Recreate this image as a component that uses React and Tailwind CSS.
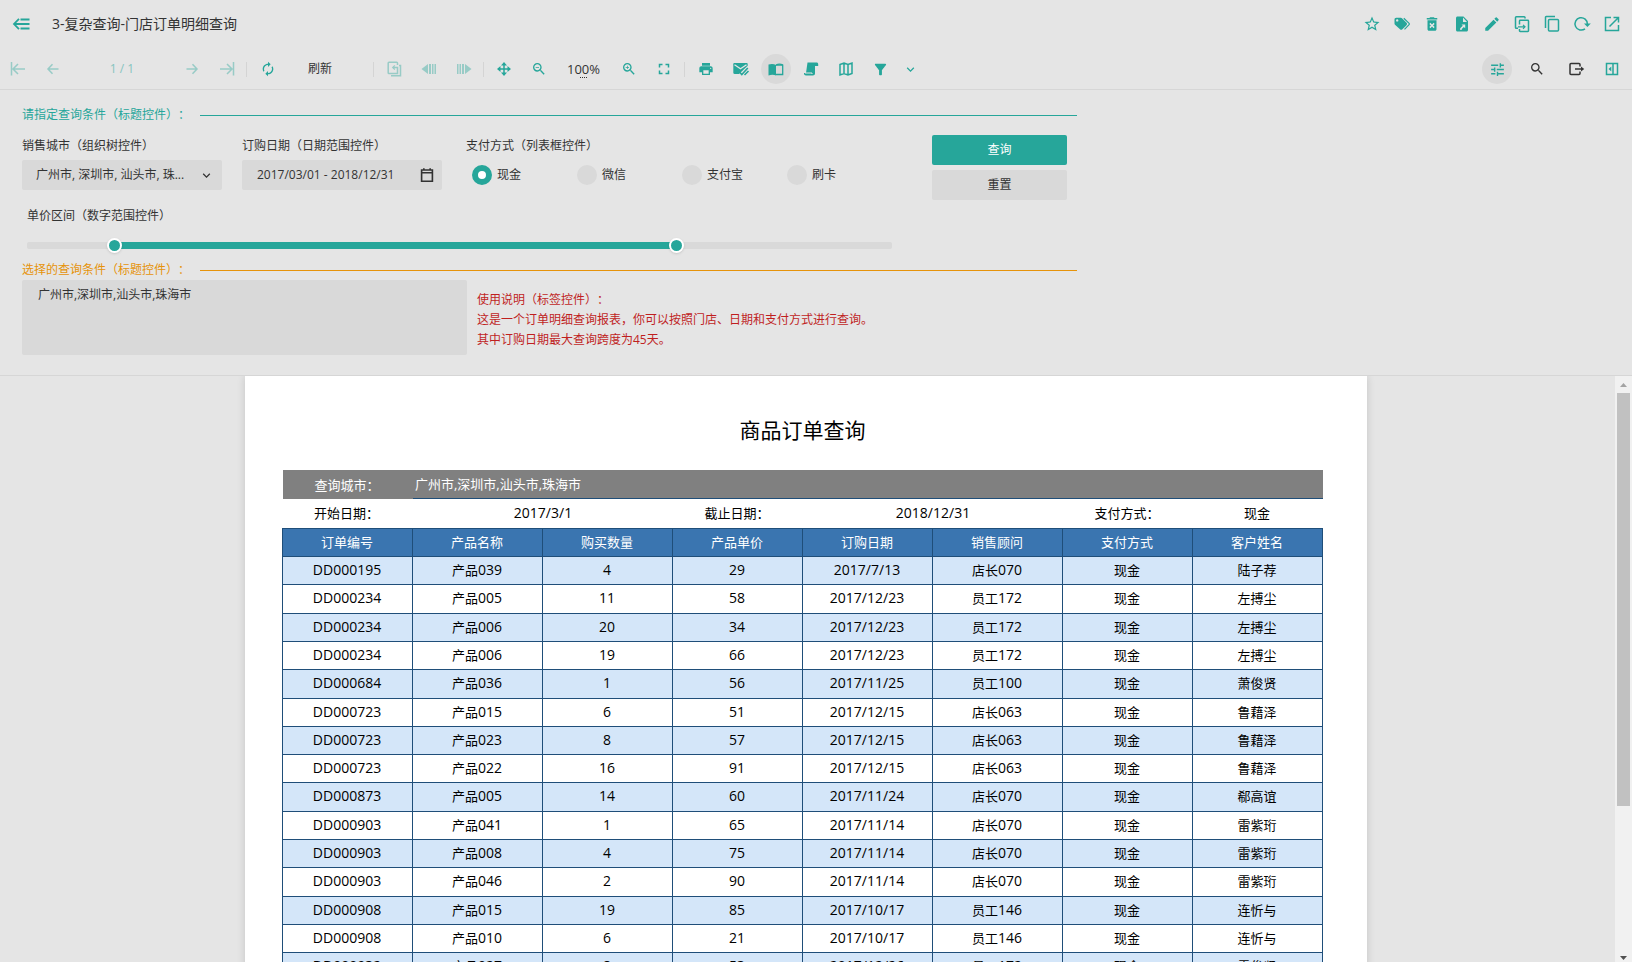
import { useState } from 'react';
import {
  MdAutorenew,
  MdDeleteForever,
  MdEdit,
  MdExpandMore,
  MdFilterAlt,
  MdFullscreen,
  MdPrint,
  MdSearch,
  MdStarBorder,
  MdTune,
  MdZoomIn,
  MdZoomOut,
} from 'react-icons/md';

const Svg = ({ children, className = '' }) => (
  <svg
    viewBox="0 0 20 20"
    className={`h-5 w-5 ${className}`}
    fill="none"
    stroke="currentColor"
    strokeWidth="1.5"
    aria-hidden="true"
  >
    {children}
  </svg>
);

const BackIcon = () => (
  <Svg>
    <path strokeWidth="1.8" d="M8 4.8 3 10l5 5.2M3 10h15.5M9.5 5.5h9M9.5 14.5h9" />
  </Svg>
);
const FirstIcon = () => (
  <Svg>
    <path d="M3.5 3v13.5M10 5l-5 5 5 5M5 10h12" />
  </Svg>
);
const PrevIcon = () => (
  <Svg>
    <path d="M9.5 5.2 5 10l4.5 4.8M5 10h10.5" />
  </Svg>
);
const NextIcon = () => (
  <Svg>
    <path d="M10.5 5.2 15 10l-4.5 4.8M15 10H4.5" />
  </Svg>
);
const LastIcon = () => (
  <Svg>
    <path d="M16.5 3v13.5M10 5l5 5-5 5M15 10H3" />
  </Svg>
);
const TagsIcon = () => (
  <Svg>
    <path
      fill="currentColor"
      stroke="none"
      fillRule="evenodd"
      d="M2.500 5.500c0-1 .7-1.700 1.700-1.700h4.600c.5 0 .9.2 1.200.500l4.500 4.500c.7.700.7 1.700 0 2.400l-4.100 4.100c-.7.700-1.700.7-2.400 0L3 10.800c-.3-.3-.5-.7-.5-1.200zM5.200 5.200a1.200 1.200 0 1 0 0 2.400 1.200 1.200 0 0 0 0-2.400z"
    />
    <path strokeWidth="1.2" d="m11.800 4.200 5.300 5.200c.4.400.4.900 0 1.300l-4.600 4.600" />
  </Svg>
);
const FileShareIcon = () => (
  <Svg>
    <path
      fill="currentColor"
      stroke="none"
      fillRule="evenodd"
      d="M5.500 2.500h6l4.500 4.500v9c0 .8-.7 1.500-1.500 1.500h-9C4.700 17.500 4 16.800 4 16V4c0-.8.7-1.500 1.500-1.500zM11 3.500V8h4zM9.500 10.500l1.300 1.300-2.600 2.500v1.700h1.500v-1l2.200-2.100 1.300 1.300v-3.700z"
    />
  </Svg>
);
const CopyArrowIcon = () => (
  <Svg>
    <path d="M13 4.500V3.500c0-.5-.3-.8-.8-.8H4.300c-.5 0-.8.3-.8.8v10c0 .5.3.8.8.8H6" />
    <path d="M7.500 10.500V7c0-.4.300-.7.700-.7h7.600c.4 0 .7.300.7.700v9.800c0 .4-.3.700-.7.700H8.200c-.4 0-.7-.3-.7-.7V15" />
    <path strokeWidth="1.2" d="M6 12.800h6.800M11 10.800l2 2-2 2" />
  </Svg>
);
const CopyIcon = () => (
  <Svg>
    <path d="M3.500 14V3.200c0-.4.3-.7.700-.7H13" />
    <rect x="6.5" y="5.5" width="10" height="11.5" rx="1" />
  </Svg>
);
const RedoIcon = () => (
  <Svg>
    <path d="M13 14.800a6.200 6.200 0 1 1 2.400-4.800" />
    <path fill="currentColor" stroke="none" d="M12 9.500h6.800L15.400 13z" />
  </Svg>
);
const OpenIcon = () => (
  <Svg>
    <path d="M9 3.500H3.500v13h13V11M11.500 3.500h5v5M16.500 3.500l-9 9" />
  </Svg>
);
const ExportCopyIcon = () => (
  <Svg>
    <path d="M13.500 6V4c0-.5-.3-.8-.8-.8H5c-.5 0-.8.3-.8.8v9.800c0 .5.300.8.8.8h8.500V8.500H9" />
    <path strokeWidth="1.2" d="M10.800 6.500 8.700 8.500l2.100 2" />
    <path d="M15 6.500h1.500v10.300H7" />
  </Svg>
);
const StepBackIcon = () => (
  <Svg>
    <path fill="currentColor" stroke="none" d="M2.500 10 9 5v10zM10 5h2v10h-2zM13 5h1.500v10H13zM15.500 5H17v10h-1.500z" />
  </Svg>
);
const StepForwardIcon = () => (
  <Svg>
    <path fill="currentColor" stroke="none" d="M17.500 10 11 5v10zM8 5h2v10H8zM5.500 5H7v10H5.500zM3 5h1.500v10H3z" />
  </Svg>
);
const MoveIcon = () => (
  <Svg>
    <path d="M10 4v12M4 10h12" />
    <path
      fill="currentColor"
      stroke="none"
      d="m10 3 3 3.500H7zM10 17l3-3.500H7zM3 10l3.500-3v6zM17 10l-3.500-3v6z"
    />
  </Svg>
);
const MailIcon = () => (
  <Svg>
    <path
      fill="currentColor"
      stroke="none"
      d="M3.500 4h12c.8 0 1.200.5 1.200 1.200v1.600L8 15H3.500c-.8 0-1.200-.5-1.200-1.200V5.200C2.300 4.500 2.700 4 3.500 4z"
    />
    <path stroke="#e5e5e5" strokeWidth="1.3" d="m3.500 5.800 6 4 6-4" />
    <path strokeWidth="1.6" d="m8.500 13 2.300 2.500 6-6.500M13.500 16l4-4" />
  </Svg>
);
const BookIcon = () => (
  <Svg>
    <path d="M10 6.200h6.700v9.300H10" strokeWidth="1.3" />
    <path
      fill="currentColor"
      stroke="none"
      d="M2.500 5.500C5 4.700 8 4.700 10 6v10.500c-2-1-5-1-7.500 0z"
    />
    <path d="M10 6c2-1 4.500-1 6.800-.2" strokeWidth="1.3" />
  </Svg>
);
const ScrollIcon = () => (
  <Svg>
    <path
      fill="currentColor"
      stroke="none"
      d="M6.500 3.500h9c1 0 1.700.7 1.700 1.700V7H14v7.500c0 1.300-.9 2-2 2H5c-1.200 0-2-.8-2-2V14h2z"
    />
    <path stroke="#e5e5e5" strokeWidth="1" d="M4 14h7v1" />
  </Svg>
);
const MapIcon = () => (
  <Svg>
    <path d="M4 5.500 8 4l4 1.500L16 4v10.500L12 16l-4-1.500L4 16zM8 4v10.500M12 5.500V16" />
  </Svg>
);
const ExitIcon = () => (
  <Svg>
    <path d="M13 7.500V5.500c0-.6-.4-1-1-1H4c-.6 0-1 .4-1 1v9c0 .6.4 1 1 1h8c.6 0 1-.4 1-1v-2" />
    <path d="M8 10h8" />
    <path fill="currentColor" stroke="none" d="M14 7.500 17.200 10 14 12.500z" />
  </Svg>
);
const PanelIcon = () => (
  <Svg>
    <path d="M4.500 4.500h11v11h-11zM11 4.500v11" />
    <path fill="currentColor" stroke="none" d="M9.300 7.500v5L6.500 10z" />
  </Svg>
);
const CalendarIcon = () => (
  <Svg className="h-[18px] w-[18px]">
    <path d="M4 4.500h12v12.500H4zM4 7.500h12M6.500 2.500v2M13.500 2.500v2" strokeWidth="1.8" />
  </Svg>
);

const IconButton = ({ label, children, size = 'w-[35px]', tone = 'text-[#26a69a]', active, disabled }) => (
  <button
    type="button"
    aria-label={label}
    disabled={disabled}
    className={`flex h-[30px] shrink-0 items-center justify-center ${size} ${tone} ${disabled ? 'opacity-40' : ''}`}
  >
    {active ? (
      <span className="flex h-[30px] w-[30px] shrink-0 items-center justify-center rounded-full bg-[#d9d9d9]">{children}</span>
    ) : (
      children
    )}
  </button>
);

const Divider = ({ className }) => <span className={`h-[15px] w-px shrink-0 bg-[#d4d4d4] ${className}`} />;

const SectionTitle = ({ children, tone, line }) => (
  <div className="flex h-5 max-w-[1055px] items-center">
    <h2 className={`w-[178px] shrink-0 whitespace-nowrap ${tone}`}>{children}</h2>
    <span className={`h-px flex-1 ${line}`} />
  </div>
);

const payments = ['现金', '微信', '支付宝', '刷卡'];

const columns = ['订单编号', '产品名称', '购买数量', '产品单价', '订购日期', '销售顾问', '支付方式', '客户姓名'];

const orders = [
  ['DD000195', '产品039', '4', '29', '2017/7/13', '店长070', '现金', '陆子荐'],
  ['DD000234', '产品005', '11', '58', '2017/12/23', '员工172', '现金', '左搏尘'],
  ['DD000234', '产品006', '20', '34', '2017/12/23', '员工172', '现金', '左搏尘'],
  ['DD000234', '产品006', '19', '66', '2017/12/23', '员工172', '现金', '左搏尘'],
  ['DD000684', '产品036', '1', '56', '2017/11/25', '员工100', '现金', '萧俊贤'],
  ['DD000723', '产品015', '6', '51', '2017/12/15', '店长063', '现金', '鲁藉泽'],
  ['DD000723', '产品023', '8', '57', '2017/12/15', '店长063', '现金', '鲁藉泽'],
  ['DD000723', '产品022', '16', '91', '2017/12/15', '店长063', '现金', '鲁藉泽'],
  ['DD000873', '产品005', '14', '60', '2017/11/24', '店长070', '现金', '郗高谊'],
  ['DD000903', '产品041', '1', '65', '2017/11/14', '店长070', '现金', '雷紫珩'],
  ['DD000903', '产品008', '4', '75', '2017/11/14', '店长070', '现金', '雷紫珩'],
  ['DD000903', '产品046', '2', '90', '2017/11/14', '店长070', '现金', '雷紫珩'],
  ['DD000908', '产品015', '19', '85', '2017/10/17', '员工146', '现金', '连忻与'],
  ['DD000908', '产品010', '6', '21', '2017/10/17', '员工146', '现金', '连忻与'],
  ['DD000932', '产品027', '8', '53', '2017/12/26', '员工172', '现金', '雷俊贤'],
];

const rangeClass =
  'pointer-events-none absolute inset-0 h-5 w-full appearance-none bg-transparent [&::-webkit-slider-thumb]:pointer-events-auto [&::-webkit-slider-thumb]:h-[15px] [&::-webkit-slider-thumb]:w-[15px] [&::-webkit-slider-thumb]:appearance-none [&::-webkit-slider-thumb]:rounded-full [&::-webkit-slider-thumb]:border-2 [&::-webkit-slider-thumb]:border-white [&::-webkit-slider-thumb]:bg-[#26a69a] [&::-webkit-slider-thumb]:shadow';

const PriceRange = () => {
  const [low, setLow] = useState(94);
  const [high, setHigh] = useState(755);

  return (
    <div className="ml-[5px] mt-[5px] max-w-[865px]">
      <div className="h-[21px] leading-[21px]">单价区间（数字范围控件）</div>
      <div className="relative mb-[5px] mt-[9px] flex h-5 items-center">
        <div className="h-[7px] w-full overflow-hidden rounded-xs bg-[#d9d9d9]">
          <div
            className="h-full bg-[#26a69a]"
            style={{ marginLeft: `${low / 10}%`, width: `${(high - low) / 10}%` }}
          />
        </div>
        <input type="range" aria-label="最低单价" min="0" max="1000" value={low} onChange={(e) => setLow(Number(e.target.value))} className={rangeClass} />
        <input type="range" aria-label="最高单价" min="0" max="1000" value={high} onChange={(e) => setHigh(Number(e.target.value))} className={rangeClass} />
      </div>
    </div>
  );
};

const Header = () => (
  <header className="shrink-0 border-b border-[#d6d6d6]">
    <div className="flex h-12 items-center justify-between pl-[11px] pr-[5px]">
      <div className="flex items-center">
        <button type="button" aria-label="返回" className="w-5 text-[#26a69a]">
          <BackIcon />
        </button>
        <h1 className="ml-[21px] text-sm">3-复杂查询-门店订单明细查询</h1>
      </div>
      <div className="flex">
        <IconButton label="收藏" size="w-[30px]"><MdStarBorder size={18} /></IconButton>
        <IconButton label="标签" size="w-[30px]"><TagsIcon /></IconButton>
        <IconButton label="删除" size="w-[30px]"><MdDeleteForever size={18} /></IconButton>
        <IconButton label="另存为" size="w-[30px]"><FileShareIcon /></IconButton>
        <IconButton label="编辑" size="w-[30px]"><MdEdit size={18} /></IconButton>
        <IconButton label="移动到" size="w-[30px]"><CopyArrowIcon /></IconButton>
        <IconButton label="复制" size="w-[30px]"><CopyIcon /></IconButton>
        <IconButton label="重新加载" size="w-[30px]"><RedoIcon /></IconButton>
        <IconButton label="新窗口打开" size="w-[30px]"><OpenIcon /></IconButton>
      </div>
    </div>

    <div className="flex h-[41px] items-center justify-between pt-px">
      <div className="flex items-center">
        <IconButton label="首页" disabled><FirstIcon /></IconButton>
        <IconButton label="上一页" disabled><PrevIcon /></IconButton>
        <span className="w-[104px] text-center text-xs text-[#26a69a] opacity-50">1 / 1</span>
        <IconButton label="下一页" disabled><NextIcon /></IconButton>
        <IconButton label="末页" disabled><LastIcon /></IconButton>
        <Divider className="ml-0.5 mr-[3px]" />
        <IconButton label="自动刷新"><MdAutorenew size={16} /></IconButton>
        <button type="button" className="h-[30px] w-[70px] text-xs">刷新</button>
        <Divider className="ml-[18px] mr-0.5" />
        <IconButton label="导出" disabled><ExportCopyIcon /></IconButton>
        <IconButton label="后退" disabled><StepBackIcon /></IconButton>
        <IconButton label="前进" disabled><StepForwardIcon /></IconButton>
        <Divider className="mx-0.5" />
        <IconButton label="拖动"><MoveIcon /></IconButton>
        <IconButton label="缩小"><MdZoomOut size={16} /></IconButton>
        <button type="button" className="flex h-[30px] w-[55px] flex-col items-center justify-center text-[13px] leading-4">
          100%
          <span className="w-[7px] border-b border-dotted border-[#333]" />
        </button>
        <IconButton label="放大"><MdZoomIn size={16} /></IconButton>
        <IconButton label="全屏"><MdFullscreen size={18} /></IconButton>
        <Divider className="mx-[3px]" />
        <IconButton label="打印"><MdPrint size={16} /></IconButton>
        <IconButton label="邮件"><MailIcon /></IconButton>
        <IconButton label="分页阅读" active><BookIcon /></IconButton>
        <IconButton label="连续阅读"><ScrollIcon /></IconButton>
        <IconButton label="导航图"><MapIcon /></IconButton>
        <IconButton label="筛选"><MdFilterAlt size={17} /></IconButton>
        <IconButton label="更多" size="w-[25px]"><MdExpandMore size={15} /></IconButton>
      </div>
      <div className="flex items-center pr-[5px]">
        <IconButton label="查询条件" size="w-10" active><MdTune size={17} /></IconButton>
        <IconButton label="搜索" size="w-10" tone="text-[#333]"><MdSearch size={16} /></IconButton>
        <IconButton label="导出报表" size="w-10" tone="text-[#333]"><ExitIcon /></IconButton>
        <IconButton label="侧栏" size="w-[30px]"><PanelIcon /></IconButton>
      </div>
    </div>
  </header>
);

const QueryPanel = () => {
  const [payment, setPayment] = useState('现金');

  return (
    <section className="shrink-0 border-b border-[#d6d6d6] px-[22px] pb-5 pt-[15px]">
      <SectionTitle tone="text-[#26a69a]" line="bg-[#26a69a]">请指定查询条件（标题控件）：</SectionTitle>

      <div className="mt-2.5 flex max-w-[1045px] justify-between">
        <div className="flex">
          <div className="w-[200px]">
            <label htmlFor="city" className="block h-[25px] leading-[21px]">销售城市（组织树控件）</label>
            <div className="relative">
              <select id="city" className="block h-[30px] w-full appearance-none rounded-xs bg-[#d9d9d9] pl-3.5 pr-7">
                <option>广州市, 深圳市, 汕头市, 珠...</option>
              </select>
              <MdExpandMore size={15} className="pointer-events-none absolute right-2 top-2" />
            </div>
          </div>
          <div className="ml-5 w-[200px]">
            <label htmlFor="dates" className="block h-[25px] leading-[21px]">订购日期（日期范围控件）</label>
            <div className="flex h-[30px] items-center rounded-xs bg-[#d9d9d9] pl-[15px] pr-1.5">
              <input id="dates" type="text" defaultValue="2017/03/01 - 2018/12/31" className="min-w-0 flex-1 bg-transparent outline-none" />
              <CalendarIcon />
            </div>
          </div>
          <fieldset className="ml-6">
            <legend className="block h-[25px] leading-[21px]">支付方式（列表框控件）</legend>
            <div className="flex pl-1.5">
              {payments.map((name) => (
                <label key={name} className="flex h-[30px] w-[105px] items-center gap-[5px]">
                  <input
                    type="radio"
                    name="payment"
                    checked={payment === name}
                    onChange={() => setPayment(name)}
                    className="h-5 w-5 appearance-none rounded-full bg-[#d9d9d9] checked:border-[6px] checked:border-[#26a69a] checked:bg-white"
                  />
                  {name}
                </label>
              ))}
            </div>
          </fieldset>
        </div>
        <div className="flex w-[135px] flex-col gap-[5px]">
          <button type="button" className="h-[30px] rounded-xs bg-[#26a69a] text-white">查询</button>
          <button type="button" className="h-[30px] rounded-xs bg-[#d9d9d9]">重置</button>
        </div>
      </div>

      <PriceRange />

      <SectionTitle tone="text-[#e6930a]" line="bg-[#e6930a]">选择的查询条件（标题控件）：</SectionTitle>
      <div className="flex">
        <textarea
          aria-label="选择的查询条件"
          defaultValue="广州市,深圳市,汕头市,珠海市"
          className="block h-[75px] w-[445px] resize-none rounded-xs bg-[#d9d9d9] px-4 py-[5px] leading-5 outline-none"
        />
        <div className="ml-2.5 pt-2.5 leading-5 text-[#c01f1f]">
          <p>使用说明（标签控件）：</p>
          <p>这是一个订单明细查询报表，你可以按照门店、日期和支付方式进行查询。</p>
          <p>其中订购日期最大查询跨度为45天。</p>
        </div>
      </div>
    </section>
  );
};

const cellClass = 'border-b border-r border-[#1f4e79] pl-0 pr-px pt-0 pb-0.5 first:border-l';

// digits are set one step larger than the Chinese text beside them
const CellText = ({ value }) =>
  value.split(/([\dA-Z/]+)/).filter(Boolean).map((part) => (
    <span key={part} className={/\d/.test(part) ? 'text-sm leading-5' : ''}>{part}</span>
  ));

const Report = () => (
  <article className="mx-auto w-[1122px] bg-white pb-10 pl-[37px] pr-11 pt-[38px] text-black shadow-[0_0_8px_rgba(0,0,0,0.14)]">
    <h2 className="mb-6 h-8 text-center text-[21px] leading-8">商品订单查询</h2>
    <table className="w-full table-fixed border-separate border-spacing-0 text-center text-[13px] leading-5">
      <colgroup>
        <col className="w-[131px]" />
        {columns.slice(1).map((name) => (
          <col key={name} className="w-[130px]" />
        ))}
      </colgroup>
      <thead>
        <tr className="h-[29px] text-white">
          <th className="border-l border-white bg-[#808080] py-0 pl-0 pr-0.5 font-normal">查询城市：</th>
          <td colSpan={7} className="border-b border-[#1f4e79] bg-[#808080] py-0 pl-0.5 pr-0 text-left">广州市,深圳市,汕头市,珠海市</td>
        </tr>
        <tr className="h-[29px]">
          <th className="pb-0.5 pl-0 pr-0.5 pt-0 font-normal">开始日期：</th>
          <td colSpan={2} className="px-0 pb-0.5 pt-0 text-sm">2017/3/1</td>
          <th className="pb-0.5 pl-0 pr-0.5 pt-0 font-normal">截止日期：</th>
          <td colSpan={2} className="px-0 pb-0.5 pt-0 text-sm">2018/12/31</td>
          <th className="pb-0.5 pl-0 pr-0.5 pt-0 font-normal">支付方式：</th>
          <td className="pb-0.5 pl-0 pr-0.5 pt-0">现金</td>
        </tr>
        <tr className="h-[29px] bg-[#3a75b0] text-white">
          {columns.map((name) => (
            <th key={name} className={`border-t font-normal ${cellClass}`}>{name}</th>
          ))}
        </tr>
      </thead>
      <tbody>
        {orders.map((row, i) => (
          <tr key={i} className={`${i % 7 === 1 || i % 7 === 4 ? 'h-[29px]' : 'h-7'} ${i % 2 === 0 ? 'bg-[#d4e6f9]' : 'bg-white'}`}>
            {row.map((value, c) => (
              <td key={c} className={cellClass}><CellText value={value} /></td>
            ))}
          </tr>
        ))}
      </tbody>
    </table>
  </article>
);

const Scrollbar = () => (
  <div className="flex w-[17px] shrink-0 flex-col items-center bg-[#f1f1f1]">
    <svg viewBox="0 0 17 17" className="h-[17px] w-[17px] shrink-0" aria-hidden="true">
      <path d="M5 11h7L8.500 7z" fill="#a3a3a3" />
    </svg>
    <div className="flex w-full flex-1 flex-col items-center">
      <div className="h-[74%] w-[13px] bg-[#c1c1c1]" />
    </div>
    <svg viewBox="0 0 17 11" className="h-[11px] w-[17px] shrink-0" aria-hidden="true">
      <path d="M5 5h7L8.500 9z" fill="#505050" />
    </svg>
  </div>
);

export default function App() {
  return (
    <div
      lang="zh-CN"
      className="flex h-screen flex-col overflow-hidden bg-[#e5e5e5] font-['Open_Sans','Noto_Sans_CJK_SC',sans-serif] text-xs text-[#333] [text-spacing-trim:space-all]"
    >
      <Header />
      <QueryPanel />
      <main className="flex min-h-0 flex-1">
        <div className="min-w-0 flex-1 overflow-hidden pr-[3px]">
          <Report />
        </div>
        <Scrollbar />
      </main>
    </div>
  );
}
